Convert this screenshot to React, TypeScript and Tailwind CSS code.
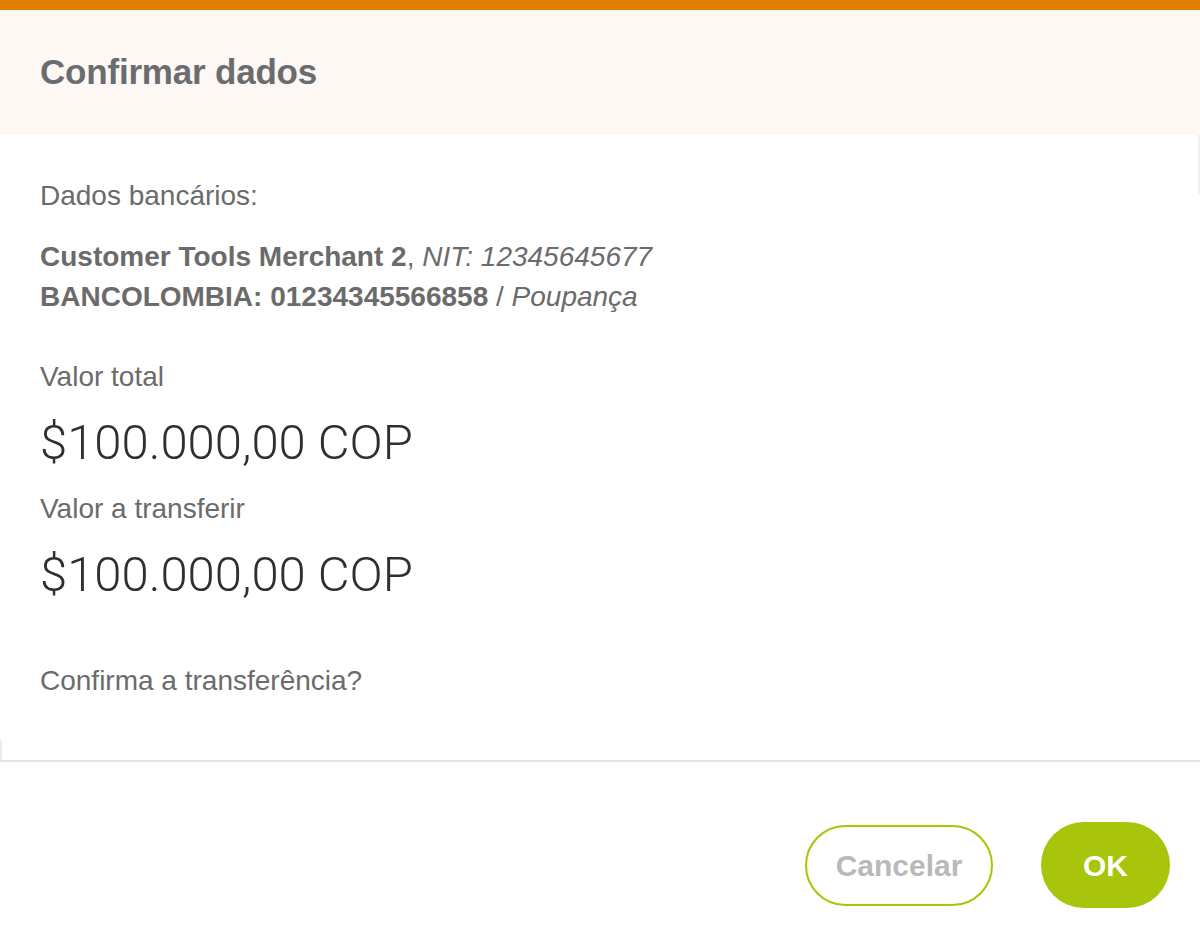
export default function App() {
    const sans = "font-['Liberation_Sans',Arial,sans-serif]";
    return (
        <div className={`w-[1200px] h-[948px] bg-white flex flex-col ${sans}`}>
            <div className="h-[10px] bg-[#e17f00]"></div>
            <div className="h-[125px] bg-[#fdf8f4] flex items-center px-10">
                <h1 className="text-[35px] font-bold text-[#6b6c6f] tracking-[-0.2px]">Confirmar dados</h1>
            </div>
            <div className="h-[625px] flex flex-col px-10 pt-[41px] text-[#6b6b6b] relative">
                <div className="absolute right-0 top-0 h-[60px] w-[2px] bg-[#f0f0f0]"></div>
                <div className="absolute left-0 bottom-0 h-[20px] w-[2px] bg-[#ececec]"></div>
                <p className="text-[28px] leading-[40px]">Dados bancários:</p>
                <div className="mt-[21px] text-[28px] leading-[40px]">
                    <p><span className="font-bold">Customer Tools Merchant 2</span>, <span className="italic">NIT: 12345645677</span></p>
                    <p><span className="font-bold">BANCOLOMBIA: 01234345566858</span> / <span className="italic">Poupança</span></p>
                </div>
                <p className="mt-[40px] text-[28px] leading-[40px]">Valor total</p>
                <p className="mt-[16px] text-[49px] leading-[60px] font-light text-[#2f2f2f] font-['Roboto',sans-serif]">$100.000,00 COP</p>
                <p className="mt-[16px] text-[28px] leading-[40px]">Valor a transferir</p>
                <p className="mt-[16px] text-[49px] leading-[60px] font-light text-[#2f2f2f] font-['Roboto',sans-serif]">$100.000,00 COP</p>
                <p className="mt-[56px] text-[28px] leading-[40px]">Confirma a transferência?</p>
            </div>
            <div className="h-[2px] bg-[#e6e6e6]"></div>
            <div className="flex-1 flex items-center justify-end gap-12 pr-[30px] pt-[20px]">
                <button className="w-[188px] h-[81px] rounded-full border-2 border-[#a8c40b] text-[30px] font-bold text-[#b9b9b9] bg-white">Cancelar</button>
                <button className="w-[129px] h-[86px] rounded-full bg-[#a8c40b] text-[30px] font-bold text-white">OK</button>
            </div>
        </div>
    );
}
